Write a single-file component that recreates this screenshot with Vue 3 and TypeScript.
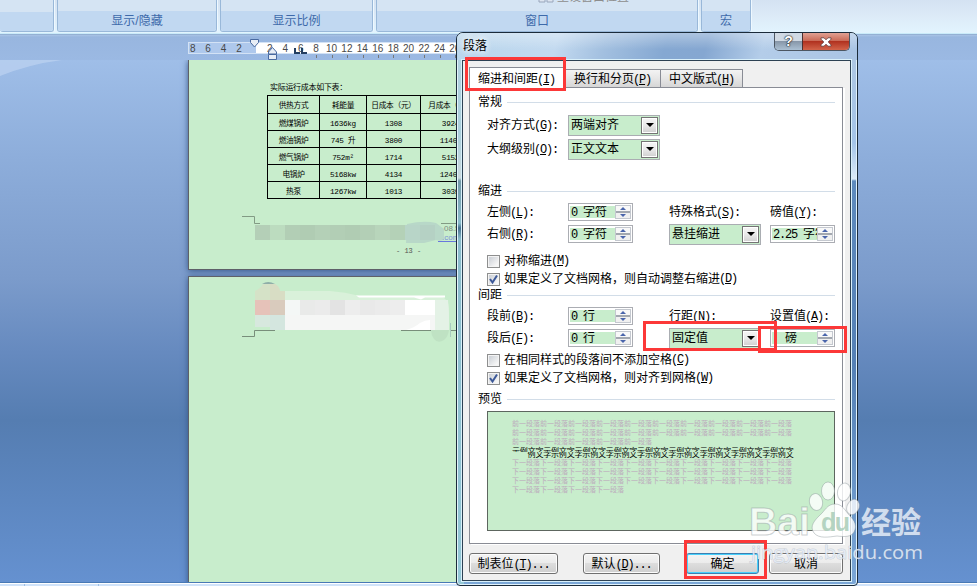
<script setup lang="ts">
interface Row { name: string; use: string; day: string; month: string }
interface Tile { x: number; y: number; w: number; h: number; c: string }

const groups = [
  { title: '', cls: 'g0' },
  { title: '显示/隐藏', cls: 'g1' },
  { title: '显示比例', cls: 'g2' },
  { title: '窗口', cls: 'g3' },
  { title: '宏', cls: 'g4' },
]

const rulerMarks = ['8', '6', '4', '2', '', '2', '4', '6', '8', '10', '12', '14', '16', '18', '20', '22', '24', '26']

const rows: Row[] = [
  { name: '燃煤锅炉', use: '1636kg', day: '1308', month: '3924' },
  { name: '燃油锅炉', use: '745 升', day: '3800', month: '11400' },
  { name: '燃气锅炉', use: '752m²', day: '1714', month: '5152' },
  { name: '电锅炉', use: '5168kw', day: '4134', month: '12402' },
  { name: '热泵', use: '1267kw', day: '1013', month: '3039' },
]

const footTiles: Tile[] = ['#b4cfb7', '#bcdcbf', '#b2ceb5', '#b0ccb3', '#b4d0b7', '#b2ceb5', '#b0ccb3', '#b3cfb6', '#b8d5bb', '#b4d1b7', '#b8d5c8', '#b5d1c4']
  .map((c, i) => ({ x: 66 + i * 15, y: 165, w: 15, h: 15, c }))

const headTiles: Tile[] = [
  { x: 66, y: 23, w: 15, h: 15, c: '#e6c2b9' },
  { x: 81, y: 23, w: 15, h: 15, c: '#d9cbbd' },
  { x: 66, y: 38, w: 15, h: 12, c: '#d7e8de' },
  { x: 81, y: 38, w: 15, h: 15, c: '#d4e6df' },
  ...['#f4f7f6', '#e9eae9', '#ebebeb', '#e3e3e3', '#ededed', '#e9e9e9', '#ebebeb', '#ededed', '#ffffff', '#ffffff']
    .map((c, i) => ({ x: 96 + i * 15, y: 23, w: 15, h: 15, c })),
  { x: 96, y: 38, w: 150, h: 15, c: '#f5f6f5' },
]

const before = '前一段落'
const after = '下一段落'
const sample = '示例文字'
const footButtons = [
  { text: '制表位', key: 'T', cls: 'b1' },
  { text: '默认', key: 'D', cls: 'b2' },
  { text: '确定', key: '', cls: 'b3' },
  { text: '取消', key: '', cls: 'b4' },
]
const marks = ['m1', 'm2', 'm3', 'm4']
</script>

<template>
  <div class="screen">
    <div class="ribbon">
      <div v-for="g in groups" :key="g.cls" class="group" :class="g.cls">
        <div class="group-body">
          <span v-if="g.cls === 'g3'" class="reset">
            <svg width="17" height="12" viewBox="0 0 17 12"><path d="M1 1h6v9H1zM9 1h6v9H9z" fill="#dde5f0" stroke="#98a5bb" /></svg>
            重设窗口位置
          </span>
        </div>
        <div class="group-title">{{ g.title }}</div>
      </div>
    </div>

    <div class="ruler-bar">
      <div class="ruler">
        <span v-for="(m, i) in rulerMarks" :key="i" class="mark" :class="{ tick: i > 7 }">{{ m }}</span>
      </div>
      <svg class="markers" width="70" height="25" viewBox="245 36 70 25">
        <path d="M250.500 39.500h8v3l-4 4.500-4-4.500z" fill="#e7edf6" stroke="#4869a0" />
        <path d="M272.500 47.500l4 4.500v2h-8v-2zM268.500 54.500h8v5h-8z" fill="#e7edf6" stroke="#4869a0" />
        <path d="M295 48v5h5M302 48v5h5" fill="none" stroke="#233e60" stroke-width="2" />
      </svg>
    </div>

    <div class="workspace">
      <svg class="glow" width="70" height="16" viewBox="0 0 70 16"><path d="M0 0h62Q30 4 0 16z" fill="#bdd3f1" opacity=".7" /></svg>
      <div class="page first">
        <p class="caption">实际运行成本如下表：</p>
        <table class="costs">
          <thead><tr><th>供热方式</th><th>耗能量</th><th>日成本（元）</th><th>月成本（元）</th></tr></thead>
          <tbody>
            <tr v-for="r in rows" :key="r.name"><td>{{ r.name }}</td><td>{{ r.use }}</td><td>{{ r.day }}</td><td>{{ r.month }}</td></tr>
          </tbody>
        </table>
        <svg class="marks" width="270" height="208" viewBox="0 0 270 208">
          <path d="M53 156.500h12.500v7H71M252 163.500h18" fill="none" stroke="#829b84" />
          <path d="M218 164Q235 160 247 163l8 6v10q-3 3-8 1l-12 3h-18z" fill="#b8d8c8" />
          <rect v-for="(t, i) in footTiles" :key="i" :x="t.x" :y="t.y" :width="t.w" :height="t.h" :fill="t.c" />
          <text x="255" y="171" class="tiny">08.5</text>
          <text x="253" y="180" class="tiny blue">.com</text>
          <path d="M249 181.500h21" stroke="#6878dd" />
          <text x="207" y="193" class="num">- 13 -</text>
        </svg>
      </div>
      <div class="page second">
        <svg class="marks" width="270" height="120" viewBox="0 0 270 120">
          <path d="M73 7q6-4 13 0z" fill="#8faea8" />
          <path d="M66 14q5-2 8-7h12q4 2 5 7h5v9H66z" fill="#d5e2c7" />
          <path d="M81 7h5q4 2 5 7h5v9H81z" fill="#d8ddc4" />
          <path d="M96 14h45q15 1 30 5h80q8 2 9 12v19H96z" fill="#d9f1da" />
          <path d="M167 18.500h89v2h-20l-4 2-7-2h-55z" fill="#fff" />
          <rect v-for="(t, i) in headTiles" :key="i" :x="t.x" :y="t.y" :width="t.w" :height="t.h" :fill="t.c" />
          <path d="M241 43v10h-24q8-2 14-7 5-3 10-3z" fill="#fff" />
          <path d="M246 23h13l1 15v15h-14z" fill="#e4f2e6" />
          <path d="M242 53h18q-1 7-5 10-6 4-10-1-3-4-3-9z" fill="#bfe2c3" />
          <path d="M53 59.500h12.500v-6H86M212 53.500h30M262 53.500h8" fill="none" stroke="#788e7a" />
          <path d="M261.500 46v14" stroke="#a9cbbf" />
        </svg>
      </div>
    </div>
    <div class="status"><i class="s1"></i><i class="s2"></i></div>

    <section class="dialog">
      <header class="title-bar">
        <span class="dialog-title">段落</span>
        <div class="win-buttons">
          <span class="help">?</span>
          <span class="close"><svg width="12" height="10" viewBox="0 0 12 10"><path d="M1 .8h3l2 2 2-2h3v1.400L8.200 5l2.800 2.800v1.400H8L6 7.200 4 9.200H1V7.800L3.800 5 1 2.200z" fill="#fff" stroke="#5e3a3a" stroke-width=".8" /></svg></span>
        </div>
      </header>
      <div class="client">
        <nav class="tabs">
          <span class="tab active">缩进和间距<b>(<u>I</u>)</b></span>
          <span class="tab t2">换行和分页<b>(<u>P</u>)</b></span>
          <span class="tab t3">中文版式<b>(<u>H</u>)</b></span>
        </nav>
        <div class="panel">
          <h3>常规</h3>
          <div class="grid tall">
            <label>对齐方式<b>(<u>G</u>):</b></label><div class="combo"><span>两端对齐</span><i></i></div>
          </div>
          <div class="grid tall">
            <label>大纲级别<b>(<u>O</u>):</b></label><div class="combo"><span>正文文本</span><i></i></div>
          </div>

          <h3 class="indent">缩进</h3>
          <div class="grid">
            <label>左侧<b>(<u>L</u>):</b></label><div class="spin"><span><b>0 </b>字符</span><i></i></div>
            <label>特殊格式<b>(<u>S</u>):</b></label><label>磅值<b>(<u>Y</u>):</b></label>
          </div>
          <div class="grid">
            <label>右侧<b>(<u>R</u>):</b></label><div class="spin"><span><b>0 </b>字符</span><i></i></div>
            <div class="combo"><span>悬挂缩进</span><i></i></div><div class="spin"><span><b>2.25 </b>字符</span><i></i></div>
          </div>
          <div class="checks">
            <div class="check"><i></i>对称缩进<b>(<u>M</u>)</b></div>
            <div class="check"><i><svg width="11" height="11" viewBox="0 0 11 11"><path d="M2 5l2.500 3.500L9 1.500" fill="none" stroke="#3c5898" stroke-width="2" /></svg></i>如果定义了文档网格，则自动调整右缩进<b>(<u>D</u>)</b></div>
          </div>

          <h3 class="spacing">间距</h3>
          <div class="grid">
            <label>段前<b>(<u>B</u>):</b></label><div class="spin"><span><b>0 </b>行</span><i></i></div>
            <label>行距<b>(<u>N</u>):</b></label><label>设置值<b>(<u>A</u>):</b></label>
          </div>
          <div class="grid">
            <label>段后<b>(<u>F</u>):</b></label><div class="spin"><span><b>0 </b>行</span><i></i></div>
            <div class="combo"><span>固定值</span><i></i></div><div class="spin pt"><span>磅</span><i></i></div>
          </div>
          <div class="checks low">
            <div class="check"><i></i>在相同样式的段落间不添加空格<b>(<u>C</u>)</b></div>
            <div class="check"><i><svg width="11" height="11" viewBox="0 0 11 11"><path d="M2 5l2.500 3.500L9 1.500" fill="none" stroke="#3c5898" stroke-width="2" /></svg></i>如果定义了文档网格，则对齐到网格<b>(<u>W</u>)</b></div>
          </div>

          <h3 class="pre">预览</h3>
          <div class="preview">
            <p>{{ before.repeat(10) }}</p>
            <p>{{ before.repeat(10) }}</p>
            <p>{{ before.repeat(5) }}</p>
            <div class="sample">
              <p>{{ sample.repeat(9) }}</p>
              <p class="hang">{{ sample.repeat(9).slice(1, 35) }}</p>
            </div>
            <p>{{ after.repeat(10) }}</p>
            <p>{{ after.repeat(10) }}</p>
            <p>{{ after.repeat(10) }}</p>
            <p>{{ after.repeat(4) }}</p>
          </div>
        </div>
        <footer class="buttons">
          <button v-for="b in footButtons" :key="b.cls" :class="b.cls">{{ b.text }}<b v-if="b.key">(<u>{{ b.key }}</u>)...</b></button>
        </footer>
      </div>
    </section>

    <i v-for="m in marks" :key="m" class="red" :class="m"></i>

    <svg class="watermark" width="190" height="95" viewBox="740 475 190 95">
      <g fill="#fff" fill-opacity=".8" stroke="#7f8c90" stroke-opacity=".4" stroke-width="1">
        <text x="749" y="535" font-size="38" font-weight="700" textLength="61" lengthAdjust="spacingAndGlyphs">Bai</text>
        <ellipse cx="816" cy="502" rx="6.500" ry="8.500" transform="rotate(-12 816 502)" />
        <ellipse cx="828" cy="491" rx="6.500" ry="9" />
        <ellipse cx="844" cy="492" rx="6.500" ry="9" transform="rotate(12 844 492)" />
        <ellipse cx="853" cy="507" rx="6" ry="8" transform="rotate(25 853 507)" />
        <path d="M835 504c8 0 10 7 15 12 5 5 7 10 4 16-3 5-9 5-17 4-8 1-18 3-23-3-5-7 1-13 6-18 5-4 7-11 15-11z" />
      </g>
      <text class="du" x="821" y="531" font-size="25" textLength="29">du</text>
      <g fill="#e5edf8" fill-opacity=".87" stroke="#8796a8" stroke-opacity=".35" stroke-width="1" paint-order="stroke">
        <text x="861" y="533" class="cjk" font-size="30" font-weight="700" textLength="60">经验</text>
        <text x="751" y="559" class="url" font-size="19" textLength="172" lengthAdjust="spacingAndGlyphs">jingyan.baidu.com</text>
      </g>
    </svg>
  </div>
</template>

<style>
body { margin: 0; overflow: hidden; }
</style>

<style scoped>
* { box-sizing: border-box; }
p, h3 { margin: 0; }
.screen { position: relative; width: 977px; height: 586px; overflow: hidden; display: flex; flex-direction: column; font: 12px/16px "Liberation Sans", "Noto Sans CJK SC", sans-serif; color: #000; background: #9ab8e1; }

.ribbon { flex: none; height: 34px; display: flex; gap: 3px; background: linear-gradient(#d4e2f2, #dceaf7 45%, #e2f4fe); border-bottom: 1px solid #c9eaf9; }
.group { height: 32px; display: flex; flex-direction: column; border: 1px solid #99b8d9; border-top: 0; border-radius: 0 0 3px 3px; overflow: hidden; box-shadow: 1px 0 #eef8ff; }
.g0 { width: 54px; border-left: 0; }
.g1 { width: 160px; }
.g2 { width: 153px; }
.g3 { width: 322px; }
.g4 { width: 50px; }
.group-body { height: 12px; background: #d5e4f3; }
.group-title { flex: 1; background: #c1d8f1; color: #3e6aaa; text-align: center; line-height: 20px; }
.reset { display: flex; gap: 2px; margin: -8px 0 0 161px; height: 12px; line-height: 11px; color: #8d8d8d; white-space: nowrap; }

.ruler-bar { position: relative; flex: none; height: 26px; padding-left: 188px; background: linear-gradient(#7f9cc1 0, #a9c4e6 1px, #98b6df 3px, #9bb9e3); }
.ruler { display: flex; margin-top: 8px; height: 12px; width: 280px; background: linear-gradient(90deg, #aec8ec 67px, #fff 67px); border: 1px solid #d3e2f5; border-right: 0; }
.mark { position: relative; flex: none; width: 15.430px; left: -4px; text-align: center; font-size: 10px; line-height: 11px; color: #484848; }
.tick::after { content: ""; position: absolute; left: 8px; top: 12px; width: 1px; height: 3px; background: #777; }
.markers { position: absolute; left: 245px; top: 2px; }

.workspace { position: relative; flex: none; height: 522px; padding-left: 188px; overflow: hidden; background: linear-gradient(#9fbee8, #8eaedb 18%, #7b9bcb 42%, #668abf 56%, #557db1 69%, #6591d0); }
.glow { position: absolute; left: 0; top: 0; }
.page { position: relative; width: 300px; background: #c8edcc; border-left: 1px solid #5f6168; box-shadow: 0 1px 6px #36588a; }
.first { height: 210px; border-bottom: 1px solid #5f6168; margin-bottom: 6px; padding: 20px 0 0 78px; }
.second { height: 320px; border-top: 1px solid #5f6168; }
.marks { position: absolute; left: 0; top: 0; }
.caption { height: 15px; padding-left: 3px; font: 8px/14px "Noto Sans CJK SC", sans-serif; letter-spacing: -.3px; }
.costs { width: 214px; table-layout: fixed; border-collapse: collapse; font: 7.700px/11px "Liberation Mono", "Noto Sans CJK SC", monospace; text-align: center; letter-spacing: -.3px; }
.costs th, .costs td { height: 17px; padding: 5px 0 0; border: 1px solid #000; font-weight: 400; white-space: nowrap; line-height: 11px; }
.costs th { height: 18px; padding-top: 4px; }
.costs th:nth-child(1) { width: 52px; }
.costs th:nth-child(2) { width: 47px; }
.costs th:nth-child(3) { width: 54px; }
.tiny { font: 8px "Liberation Sans", sans-serif; fill: #7d8c7f; }
.blue { fill: #7c90d8; }
.num { font: 7px "Liberation Mono", monospace; fill: #555; }

.status { flex: none; height: 4px; display: flex; border-top: 1px solid #4879b5; background: linear-gradient(#fff 1px, #d0e3fa 1px); }
.status i { border-right: 1px solid #9fbfe4; margin-top: 1px; }
.s1 { width: 25px; }
.s2 { width: 74px; }

.dialog { position: absolute; left: 456px; top: 32px; width: 402px; height: 554px; display: flex; flex-direction: column; border: 1px solid #1b2b3a; border-radius: 7px 7px 4px 4px; background: linear-gradient(#b5d3e2 0, #a9cfdb 100px, #cbd8dd 145px, #7399a8 148px, #8abccb 190px, #46708f 195px, #8abccb 206px, #94c8d7) 0 0 / 7px 100% no-repeat, linear-gradient(#b0c8e2 0, #a4c4e8 110px, #dcebf8 146px, #5d8abd 148px, #5480b5 60%, #7ba7d7); box-shadow: inset 0 0 0 1px #e2f3fc; }
.title-bar { height: 27px; display: flex; justify-content: space-between; border-radius: 6px 6px 0 0; padding-right: 7px; background: linear-gradient(#ffffff55, #ffffff00 60%), linear-gradient(105deg, #b9d6ec, #c3daf0 25%, #a3c0e0 37%, #85a8d2 52%, #85a7d1 62%, #b4cde9 76%, #a9c4e4); }
.dialog-title { padding-left: 6px; line-height: 26px; text-shadow: 0 0 6px #fff, 0 0 6px #fff; }
.win-buttons { display: flex; height: 18px; border: 1px solid #4c5662; border-top: 0; border-radius: 0 0 5px 5px; overflow: hidden; }
.help { width: 27px; text-align: center; color: #fff; font: 700 14px/16px "Liberation Sans", sans-serif; text-shadow: 0 0 1px #222, 0 0 1px #222, 0 0 2px #222; background: linear-gradient(#d0d9e3 48%, #8797a9 50%, #abc0d3); }
.close { width: 47px; display: flex; align-items: center; justify-content: center; border-left: 1px solid #4c3030; background: linear-gradient(#e1a193, #ca6b58 45%, #b13220 50%, #d2644a); }
.client { height: 521px; margin: 0 6px 0 5px; padding: 6px 0 0 6px; border: 1px solid #2d4153; background: #f0f0f0; box-shadow: 0 0 0 1px #d9f0fa; }

b { font: 12px/16px "Liberation Mono", monospace; letter-spacing: -1.200px; font-weight: 400; white-space: pre; }
label b, .check b, .tab b { margin-left: -1px; }
u { text-underline-offset: 1px; }
.tabs { display: flex; align-items: flex-end; height: 20px; }
.tab { height: 18px; padding: 0 0 0 7px; line-height: 19px; border: 1px solid #898c95; border-left: 0; border-bottom: 0; background: linear-gradient(#f3f3f3, #e6e6e6 50%, #d6d6d6); white-space: nowrap; }
.tab.active { position: relative; width: 96px; height: 21px; margin-bottom: -1px; padding-left: 8px; line-height: 22px; background: #fff; border-left: 1px solid #898c95; }
.t2 { width: 96px; padding-left: 9px; }
.t3 { width: 82px; padding-left: 8px; }
.panel { width: 374px; height: 457px; padding: 6px 7px 0 17px; border: 1px solid #898c95; background: #fff; box-shadow: 2px 1px #fff; }
h3 { display: flex; align-items: center; gap: 5px; height: 16px; margin: 0 0 3px -9px; font-size: 12px; font-weight: 400; line-height: 16px; }
h3::after { content: ""; flex: 1; height: 1px; background: #d2dde8; }
h3.indent { margin-top: 22px; margin-bottom: 2px; }
h3.spacing { margin-top: -1px; margin-bottom: 2px; }
h3.pre { margin-top: 4px; margin-bottom: 4px; }
.grid { display: grid; grid-template-columns: 81px 101px 101px 65px; align-items: center; height: 22px; white-space: nowrap; }
.tall { height: 24px; }
.combo { width: 92px; height: 21px; display: flex; padding: 1px; border: 1px solid #aaadb2; background: #c8edcc; }
.combo span { flex: 1; padding-left: 1px; line-height: 17px; }
.combo i { width: 17px; height: 17px; display: flex; align-items: center; justify-content: center; border: 1px solid #747474; background: linear-gradient(#f5f5f5, #e9e9e9 50%, #cfcfcf); box-shadow: inset 0 0 0 1px #fff; }
.combo i::before { content: ""; border: 4px solid transparent; border-top-color: #000; border-bottom: 0; }
.spin { width: 65px; height: 18px; display: flex; justify-content: space-between; padding: 1px; border: 1px solid #abadb3; background: #fff; }
.spin span { width: 46px; margin: 1px 0 1px 0; padding-left: 1px; overflow: hidden; background: #c8edcc; line-height: 12px; }
.spin b { line-height: 12px; }
.spin.pt span { padding-left: 13px; }
.spin i { position: relative; width: 16px; border: 1px solid #c4c8cf; background: linear-gradient(#f8f8f8 5px, #a3a8b0 5px, #a3a8b0 7px, #f0f0f0 7px); }
.spin i::before, .spin i::after { content: ""; position: absolute; left: 4px; border: 3px solid transparent; }
.spin i::before { top: 1px; border-bottom-color: #4a65ab; border-top: 0; }
.spin i::after { bottom: 1px; border-top-color: #4a65ab; border-bottom: 0; }
.checks { margin-top: 7px; }
.checks.low { margin-top: 2px; }
.check { display: flex; align-items: center; height: 18px; white-space: nowrap; }
.check i { width: 13px; height: 13px; margin-right: 4px; display: flex; border: 1px solid #8e8f8f; background: linear-gradient(135deg, #c5cad1, #f6f6f6 80%); box-shadow: inset 0 0 0 1px #f4f4f4; }
.preview { width: 348px; height: 120px; padding: 7px 0 0 24px; border: 1px solid #5d665f; background: #c8edcc; overflow: hidden; }
.preview p { height: 9px; font: 7px/9px "Noto Sans CJK SC", sans-serif; color: #bcabbc; white-space: nowrap; }
.preview .sample { height: 12px; }
.sample p { position: relative; height: 6px; overflow: hidden; color: #000; font-size: 8px; letter-spacing: -.180px; line-height: 10px; }
.sample .hang { padding-left: 15.600px; line-height: 4px; }

.buttons { display: flex; padding-top: 9px; }
button { height: 21px; padding: 0; border: 1px solid #707070; border-radius: 3px; background: linear-gradient(#f3f3f3, #ebebeb 49%, #dddddd 50%, #cfcfcf); box-shadow: inset 0 0 0 1px #fcfcfc; font: 12px/20px "Liberation Sans", "Noto Sans CJK SC", sans-serif; color: #000; white-space: nowrap; }
.b1 { width: 89px; margin-right: 25px; }
.b2 { width: 77px; margin-right: 26px; }
.b3 { width: 73px; margin-right: 10px; border-color: #3c7fb1; box-shadow: inset 0 0 0 1px #48d0fb; }
.b4 { width: 74px; }

.red { position: absolute; border: 3px solid #fc3838; }
.m1 { left: 465px; top: 57px; width: 101px; height: 34px; }
.m2 { left: 643px; top: 321px; width: 134px; height: 30px; }
.m3 { left: 758px; top: 326px; width: 89px; height: 27px; }
.m4 { left: 684px; top: 540px; width: 83px; height: 39px; }

.watermark { position: absolute; left: 740px; top: 475px; font-family: "Liberation Sans", sans-serif; }
.du { fill: #a9cdb8; fill-opacity: .85; font-weight: 700; }
.cjk { font-family: "Noto Sans CJK SC", sans-serif; }
.url { font-family: "Open Sans", "Noto Sans", sans-serif; }
</style>
